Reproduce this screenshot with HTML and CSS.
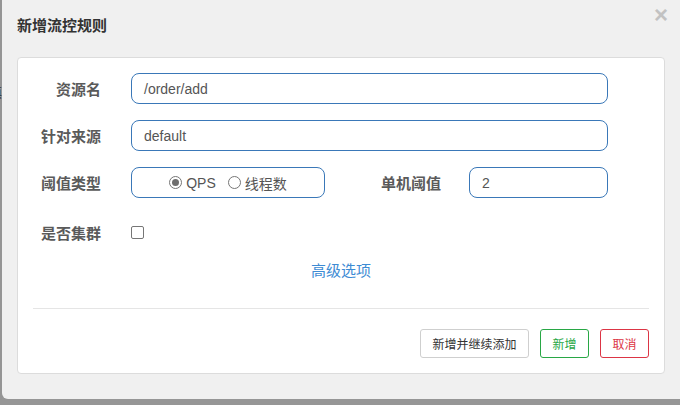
FILE: index.html
```html
<!DOCTYPE html>
<html lang="zh">
<head>
<meta charset="utf-8">
<link rel="stylesheet" href="styles.css">
</head>
<body>
<div class="backdrop">
  <div class="strip"><span class="frag">填</span></div>
  <div class="modal">
    <div class="modal-header">
      <h4 class="title">新增流控规则</h4>
      <span class="close">×</span>
    </div>
    <div class="panel">
      <div class="row">
        <label class="label">资源名</label>
        <div class="input wide">/order/add</div>
      </div>
      <div class="row">
        <label class="label">针对来源</label>
        <div class="input wide">default</div>
      </div>
      <div class="row">
        <label class="label">阈值类型</label>
        <div class="input radio-box">
          <span class="radio checked"></span><span class="opt">QPS</span>
          <span class="radio"></span><span class="opt">线程数</span>
        </div>
        <label class="label label2">单机阈值</label>
        <div class="input small">2</div>
      </div>
      <div class="row row-check">
        <label class="label">是否集群</label>
        <span class="checkbox"></span>
      </div>
      <div class="adv"><a class="adv-link">高级选项</a></div>
      <div class="divider"></div>
      <div class="footer">
        <button class="btn">新增并继续添加</button>
        <button class="btn btn-green">新增</button>
        <button class="btn btn-red">取消</button>
      </div>
    </div>
  </div>
</div>
</body>
</html>
```
FILE: styles.css
```css
html, body {
  margin: 0;
  padding: 0;
  background: #969696;
  font-family: "Liberation Sans", Arial, "Noto Sans CJK SC", sans-serif;
  overflow: hidden;
}
.backdrop {
  display: flex;
  width: 680px;
  height: 405px;
}
.strip {
  width: 2px;
  height: 400px;
  overflow: hidden;
  position: relative;
  background: #959595;
}
.frag {
  position: absolute;
  left: -11px;
  top: 82px;
  font-size: 13px;
  color: #333;
}
.modal {
  width: 678px;
  height: 399px;
  background: #f0f0f0;
  border-bottom-left-radius: 6px;
  box-sizing: border-box;
  padding: 0 13px 0 15px;
  display: flex;
  flex-direction: column;
}
.modal-header {
  height: 57px;
  display: flex;
  justify-content: space-between;
  align-items: flex-start;
}
.title {
  margin: 16px 0 0 0;
  font-size: 15px;
  line-height: 19px;
  font-weight: bold;
  color: #333;
}
.close {
  font-size: 24px;
  font-weight: bold;
  line-height: 22px;
  color: #c2c2c2;
  margin: 4px -1px 0 0;
}
.panel {
  width: 648px;
  height: 317px;
  box-sizing: border-box;
  background: #fff;
  border: 1px solid #dcdcdc;
  border-radius: 4px;
  padding: 15px 15px 0 15px;
  display: flex;
  flex-direction: column;
}
.row {
  display: flex;
  align-items: center;
  height: 31px;
  margin-bottom: 16px;
}
.row-check {
  height: 36px;
  margin-bottom: 0;
}
.label {
  width: 68px;
  text-align: right;
  font-size: 15px;
  font-weight: bold;
  color: #5a5a5a;
  margin-right: 30px;
  flex: none;
}
.label2 {
  width: 116px;
  margin-right: 28px;
}
.input {
  height: 31px;
  box-sizing: border-box;
  border: 1px solid #3a78b8;
  border-radius: 8px;
  padding: 0 12px;
  font-size: 14px;
  color: #555;
  display: flex;
  align-items: center;
}
.wide { width: 477px; }
.small { width: 139px; }
.radio-box {
  width: 194px;
  justify-content: center;
  padding: 0;
  font-size: 14px;
}
.radio {
  width: 13px;
  height: 13px;
  box-sizing: border-box;
  border: 1px solid #767676;
  border-radius: 50%;
  margin-right: 4px;
  display: flex;
  align-items: center;
  justify-content: center;
}
.radio.checked::after {
  content: "";
  width: 7px;
  height: 7px;
  border-radius: 50%;
  background: #6e6e6e;
}
.opt {
  color: #555;
  margin-right: 12px;
}
.opt:last-child { margin-right: 0; }
.checkbox {
  width: 13px;
  height: 13px;
  box-sizing: border-box;
  border: 1px solid #767676;
  border-radius: 2px;
  margin-top: 1px;
}
.adv {
  margin-top: 11px;
  height: 20px;
  text-align: center;
}
.adv-link {
  font-size: 15px;
  line-height: 20px;
  color: #3d8bd4;
}
.divider {
  margin-top: 27px;
  height: 1px;
  background: #e5e5e5;
}
.footer {
  margin-top: 20px;
  display: flex;
  justify-content: flex-end;
  gap: 11px;
}
.btn {
  height: 29px;
  box-sizing: border-box;
  padding: 0 11.5px;
  font-family: "Liberation Sans", Arial, "Noto Sans CJK SC", sans-serif;
  font-size: 12px;
  background: #fff;
  border: 1px solid #cfcfcf;
  border-radius: 3px;
  color: #333;
}
.btn-green {
  border-color: #28a745;
  color: #28a745;
}
.btn-red {
  border-color: #dc3545;
  color: #dc3545;
}
```
